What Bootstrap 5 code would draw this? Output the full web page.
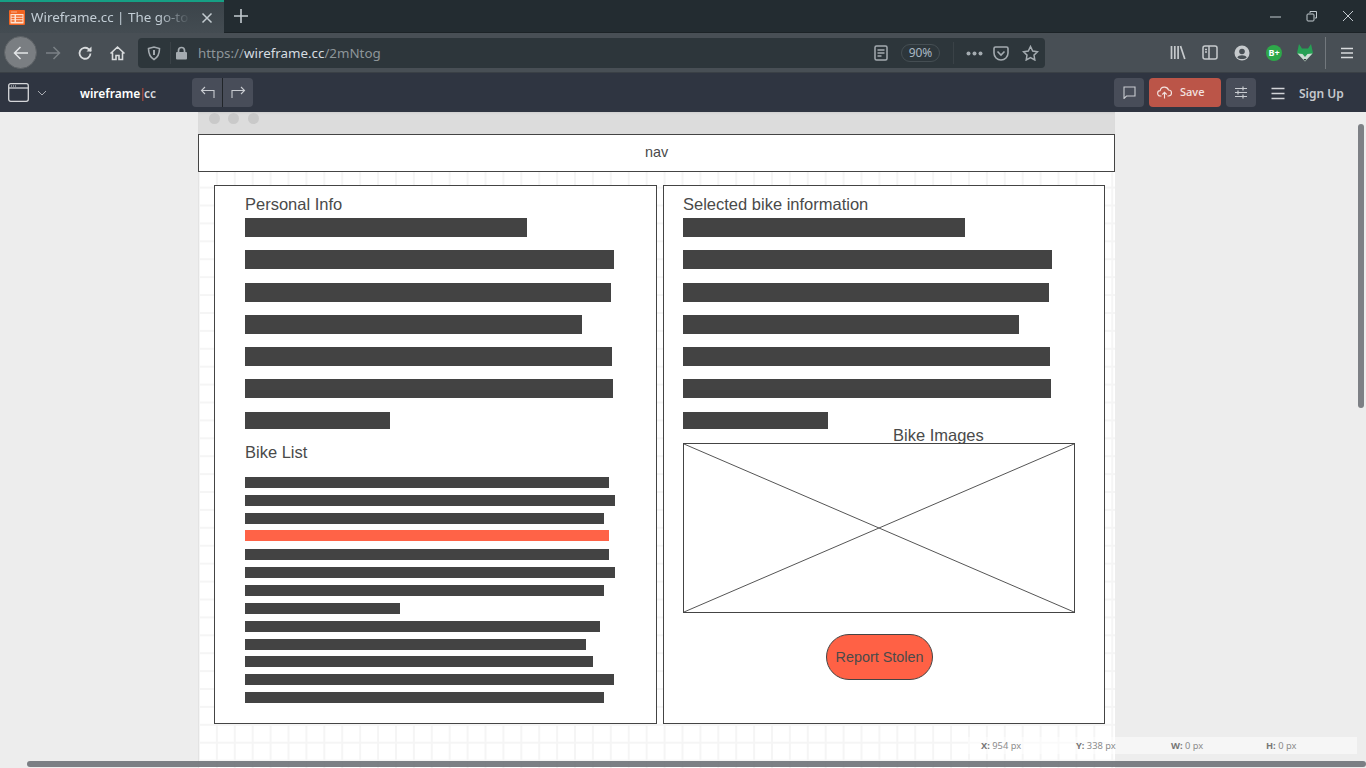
<!DOCTYPE html>
<html lang="en">
<head>
<meta charset="utf-8">
<title>Wireframe.cc</title>
<link href="https://cdn.jsdelivr.net/npm/bootstrap@5.3.0/dist/css/bootstrap.min.css" rel="stylesheet">
<style>
html,body{height:100%;overflow:hidden;margin:0}
body{background:#ededed;font-family:"Noto Sans",sans-serif;width:1366px;height:768px}
.tabstrip{height:33px;background:#232c31;border-bottom:1px solid #1c2327}
.tabitem{width:224px;height:33px;background:linear-gradient(#3b444a,#444c52);border-top:2px solid #16a085;color:#c3ced6;font-size:13.4px;padding-left:9px;gap:6px}
.tabtitle{width:163px;white-space:nowrap;-webkit-mask-image:linear-gradient(90deg,#000 78%,transparent 98%)}
.closeicon{margin-left:1px}
.newtab{margin-left:9px}
.winbtns{margin-left:auto;gap:20px;padding-right:10px}
.urlrow{height:40px;background:#484f55;border-bottom:1px solid #3a4046;padding-left:4px}
.backcircle{width:33px;height:33px;border-radius:50%;background:#7a7e82;border:1px solid #5d6266}
.navslot{width:32px}
.urlfield{position:absolute;left:138px;top:38px;width:907px;height:30px;background:#2d363b;border-radius:4px;font-size:13.35px;color:#8d9599}
.urlrow .urlhost{color:#d6dce0}
.idbox{width:33px;border-right:1px solid #3a4247;height:22px}
.lockicon{margin-left:4px}
.urltext{margin-left:10px}
.zoomchip{border:1px solid #454e53;border-radius:10px;font-size:12px;color:#a9b8c3;width:39px;height:18px;line-height:16px;text-align:center;margin-left:13px}
.urlright{margin-left:auto;padding-right:6px}
.fieldsep{width:1px;height:22px;background:#3a4247;margin-left:13px}
.dotsicon{margin-left:12px}
.pocketicon{margin-left:10px}
.staricon{margin-left:13px}
.rightset{margin-left:auto;padding-right:12px}
.gap16{margin-left:16px}
.gap14{margin-left:14px}
.rowsep{width:1px;height:32px;background:#72787d;margin-left:11px}
.appbar{height:39px;background:#2f3541;color:#fff}
.brandname{font-size:12px;font-weight:600;left:80px;top:85px;color:#fff;position:absolute;line-height:17px}
.brandname i{font-style:normal;color:#d2543f;font-weight:400;margin:0 -2px 0 -1px}
.brandname span{color:#d8dade}
.toolbtn{position:absolute;background:#484d59;border-radius:4px;height:29px;top:78px}
.undo{left:192px;width:61px}
.comment{left:1114px;width:30px}
.adjust{left:1226px;width:30px}
.savebtn{position:absolute;left:1149px;top:78px;width:72px;height:29px;background:#bb5548;border-radius:4px;color:#f3e3e0;font-size:11px;font-weight:500}
.menuicon{position:absolute;left:1271px;top:87px}
.signup{position:absolute;left:1299px;top:85px;color:#c6c9ce;font-size:12px;font-weight:600;line-height:17px}
.stage{position:absolute;left:0;top:112px;width:1366px;height:656px;overflow:hidden;background:#ededed}
.artboard{position:absolute;left:198px;top:0;width:917px;height:656px;background-color:#fff;
background-image:linear-gradient(#f5f5f5 2px,transparent 2px),linear-gradient(90deg,#f5f5f5 2px,transparent 2px);background-size:17.92px 17.92px;background-position:-1px 3px;border-left:1px solid #e3e3e3}
.dotbar{position:absolute;left:198px;top:0;width:917px;height:22px;background:#dcdcdc;box-shadow:inset 0 2px 2px -1px #cfcfcf}
.dotbar b{position:absolute;top:1px;width:11px;height:11px;border-radius:50%;background:#c9c9c9}
.dotbar b:nth-child(1){left:11px}.dotbar b:nth-child(2){left:30px}.dotbar b:nth-child(3){left:50px}
.wf{position:absolute;box-sizing:border-box}
.boxed{border:1px solid #444;background:#fff}
.wbar{position:absolute;background:#434343;height:19px}
.thin{height:11px}
.wtext{position:absolute;font-family:"Liberation Sans",sans-serif;color:#4a4a4a;font-size:16.5px;line-height:18px;white-space:nowrap}
.navlabel{left:198px;top:22px;width:917px;height:38px;font-family:"Liberation Sans",sans-serif;font-size:14.4px;color:#4a4a4a}
.p1{left:214px;top:73px;width:443px;height:539px}
.p2{left:663px;top:73px;width:442px;height:539px}
.imgbox{left:683px;top:331px;width:392px;height:170px}
.imgbox svg{display:block;width:100%;height:100%}
.stolen{left:826px;top:522px;width:107px;height:46px;background:#ff6145;border:1px solid #444;border-radius:23px;font-family:"Liberation Sans",sans-serif;font-size:14.4px;color:#4a4a4a;padding-top:1px}
.t1{left:245px;top:83px}.t2{left:245px;top:331px}.t3{left:683px;top:83px}.t4{left:893px;top:314px}
.lx{left:245px}.rx{left:683px}
.y1{top:106px}.y2{top:138px}.y3{top:171px}.y4{top:203px}.y5{top:235px}.y6{top:267px}.y7{top:300px;height:17px}
.w1{width:282px}.w2{width:369px}.w3{width:366px}.w4{width:337px}.w5{width:367px}.w6{width:368px}.w7{width:145px}
.r4{width:336px}
.z1{top:365px;width:364px}.z2{top:383px;width:370px}.z3{top:401px;width:359px}.z4{top:418px;width:364px;background:#ff6347}
.z5{top:437px;width:364px}.z6{top:455px;width:370px}.z7{top:473px;width:359px}.z8{top:491px;width:155px}
.z9{top:509px;width:355px}.z10{top:527px;width:341px}.z11{top:544px;width:348px}.z12{top:562px;width:369px}.z13{top:580px;width:359px}
.statusline{position:absolute;left:968px;top:625px;width:389px;height:17px;background:rgba(255,255,255,.5);font-size:9.3px;color:#8b8b8b;line-height:17px}
.statusline span{position:absolute;white-space:nowrap}
.statusline span:nth-child(1){left:13px}.statusline span:nth-child(2){left:108px}.statusline span:nth-child(3){left:203px}.statusline span:nth-child(4){left:298px}
.statusline b{color:#777;font-weight:700}
.vthumb{position:absolute;left:1358px;top:12px;width:6px;height:284px;background:#7d8085;border-radius:3px}
.hthumb{position:absolute;left:27px;top:649px;width:1339px;height:6px;background:rgba(110,114,120,.9);border-radius:3px}
</style>
</head>
<body>
<div class="tabstrip d-flex align-items-start">
  <div class="tabitem d-flex align-items-center">
    <svg width="16" height="15" viewBox="0 0 16 15"><rect width="16" height="15" rx="1" fill="#f26522"/><rect x="1.500" y="4" width="13" height="9.500" fill="#fde3d2"/><path d="M2.500 2h1M4.500 2h1M6.500 2h1" stroke="#fff"/><path d="M2.500 6h3M2.500 8.500h3M2.500 11h3M7 6h6.500M7 8.500h6.500M7 11h6.500" stroke="#f26522" stroke-width="1.300"/></svg>
    <span class="tabtitle">Wireframe.cc | The go-to v</span>
    <svg class="closeicon" width="12" height="12" viewBox="0 0 12 12"><path d="M1.500 1.500l9 9M10.500 1.500l-9 9" stroke="#c3cbd0" stroke-width="1.500"/></svg>
  </div>
  <svg class="newtab mt-2" width="16" height="16" viewBox="0 0 16 16"><path d="M8 1v14M1 8h14" stroke="#c3cbd0" stroke-width="1.600"/></svg>
  <div class="winbtns d-flex align-items-center mt-2">
    <svg width="16" height="16" viewBox="0 0 16 16"><path d="M2 9h11" stroke="#c3cbd0"/></svg>
    <svg width="16" height="16" viewBox="0 0 16 16" fill="none" stroke="#c3cbd0"><rect x="3" y="6" width="7" height="7" rx="1"/><path d="M6 5V3.500h6.500V10H11"/></svg>
    <svg width="16" height="16" viewBox="0 0 16 16"><path d="M3 3l10 10M13 3L3 13" stroke="#c3cbd0"/></svg>
  </div>
</div>
<div class="urlrow d-flex align-items-center">
  <div class="backcircle d-flex align-items-center justify-content-center">
    <svg width="18" height="16" viewBox="0 0 18 16" fill="none" stroke="#e4e6e8" stroke-width="1.500"><path d="M16 8H2.500M8.500 2l-6 6 6 6"/></svg>
  </div>
  <div class="navslot d-flex justify-content-center"><svg width="18" height="16" viewBox="0 0 18 16" fill="none" stroke="#7b8186" stroke-width="1.500"><path d="M2 8h13.500M9.500 2l6 6-6 6"/></svg></div>
  <div class="navslot d-flex justify-content-center"><svg width="16" height="16" viewBox="0 0 16 16" fill="none" stroke="#d8dbdd" stroke-width="1.800"><path d="M13.500 8.500A5.500 5.500 0 1 1 11.500 4L14 6"/><path d="M14.500 1.500v5h-5" stroke="none" fill="#d8dbdd"/></svg></div>
  <div class="navslot d-flex justify-content-center"><svg width="17" height="16" viewBox="0 0 17 16" fill="none" stroke="#d8dbdd" stroke-width="1.600"><path d="M1.500 8.500l7-6.500 7 6.500M3.500 7.500v7h3.500v-4h3v4h3.500v-7"/></svg></div>
  <div class="urlfield d-flex align-items-center">
    <div class="idbox d-flex justify-content-center align-items-center"><svg width="14" height="15" viewBox="0 0 14 15" fill="none" stroke="#a4abb0" stroke-width="1.600"><path d="M1.500 2.500L7 1l5.500 1.500c0 5-1 8.500-5.500 11-4.500-2.500-5.500-6-5.500-11z"/><path d="M7 4v5" stroke-width="2"/></svg></div>
    <svg class="lockicon" width="13" height="14" viewBox="0 0 13 14"><path d="M3.500 6V4.500a3 3 0 0 1 6 0V6" fill="none" stroke="#a4abb0" stroke-width="1.700"/><rect x="1" y="6" width="11" height="7.500" rx="1" fill="#a4abb0"/></svg>
    <span class="urltext">https://<span class="urlhost">wireframe.cc</span>/2mNtog</span>
    <div class="urlright d-flex align-items-center">
      <svg width="14" height="16" viewBox="0 0 14 16" fill="none" stroke="#a4abb0" stroke-width="1.500"><rect x="1" y="1" width="12" height="14" rx="1.500"/><path d="M3.500 5h7M3.500 8h7M3.500 11h4"/></svg>
      <span class="zoomchip">90%</span>
      <span class="fieldsep"></span>
      <svg class="dotsicon" width="17" height="5" viewBox="0 0 17 5" fill="#a4abb0"><circle cx="2.500" cy="2.500" r="2"/><circle cx="8.500" cy="2.500" r="2"/><circle cx="14.500" cy="2.500" r="2"/></svg>
      <svg class="pocketicon" width="16" height="15" viewBox="0 0 16 15" fill="none" stroke="#a4abb0" stroke-width="1.600"><path d="M1 2.500C1 1.500 1.500 1 2.500 1h11c1 0 1.500.5 1.500 1.500V7a7 7 0 0 1-14 0z"/><path d="M4.500 5.500L8 9l3.500-3.500"/></svg>
      <svg class="staricon" width="17" height="16" viewBox="0 0 17 16" fill="none" stroke="#a4abb0" stroke-width="1.500"><path d="M8.500 1.500l2.200 4.500 4.800.7-3.500 3.400.8 4.900-4.300-2.300-4.300 2.300.8-4.900L1.500 6.700l4.800-.7z"/></svg>
    </div>
  </div>
  <div class="rightset d-flex align-items-center">
    <svg width="16" height="15" viewBox="0 0 16 15" fill="none" stroke="#c6cacd" stroke-width="1.700"><path d="M1.500 1v13M4.800 1v13M8.100 1v13M10.500 1l4.300 13"/></svg>
    <svg class="gap16" width="16" height="15" viewBox="0 0 16 15" fill="none" stroke="#c6cacd" stroke-width="1.500"><rect x="1" y="1" width="14" height="13" rx="2"/><path d="M7 1v13M3 4.500h2M3 7h2"/></svg>
    <svg class="gap16" width="16" height="16" viewBox="0 0 16 16"><circle cx="8" cy="8" r="7.500" fill="#c6cacd"/><circle cx="8" cy="6.500" r="2.800" fill="#484f55"/><path d="M3.300 12.500c1-3 8.400-3 9.400 0-2 2-7.400 2-9.400 0z" fill="#484f55"/></svg>
    <svg class="gap16" width="16" height="16" viewBox="0 0 16 16"><circle cx="8" cy="8" r="8" fill="#2ea84a"/><text x="2.500" y="11" font-size="9" font-weight="700" fill="#fff" font-family="Noto Sans">B+</text></svg>
    <svg class="gap14" width="18" height="18" viewBox="0 0 18 18"><path d="M3 0l3 4.500h6L15 0l2 9-8 8-8-8z" fill="#27a055"/><path d="M1.500 9.500l5 .5 2.500 3 2.500-3 5-.5-7.500 8z" fill="#cfdcd5"/><path d="M7.500 15h3L9 17z" fill="#2f3a3a"/></svg>
    <span class="rowsep"></span>
    <svg class="gap14" width="14" height="14" viewBox="0 0 14 14"><path d="M1 2.500h12M1 7h12M1 11.500h12" stroke="#d8dbdd" stroke-width="1.700"/></svg>
  </div>
</div>
<div class="appbar d-flex align-items-center ps-2">
  <svg width="21" height="19" viewBox="0 0 21 19" fill="none" stroke="#d5d7da" stroke-width="1.300"><rect x=".7" y=".7" width="19.600" height="17.600" rx="2"/><path d="M1 5h19"/><path d="M3 3h1M5 3h1M7 3h1" stroke-width="1"/></svg>
  <svg class="ms-2" width="10" height="6" viewBox="0 0 10 6" fill="none" stroke="#a9acb2"><path d="M1 1l4 4 4-4"/></svg>
</div>
<span class="brandname">wireframe<i>|</i><span>cc</span></span>
<div class="toolbtn undo d-flex">
  <div class="d-flex flex-fill align-items-center justify-content-center border-end border-dark"><svg width="15" height="13" viewBox="0 0 15 13" fill="none" stroke="#c9ccd1" stroke-width="1.100"><path d="M14 12V4.500H1.500M5 1L1.500 4.500 5 8"/></svg></div>
  <div class="d-flex flex-fill align-items-center justify-content-center"><svg width="15" height="13" viewBox="0 0 15 13" fill="none" stroke="#c9ccd1" stroke-width="1.100"><path d="M1 12V4.500h12.500M10 1l3.500 3.500L10 8"/></svg></div>
</div>
<div class="toolbtn comment d-flex align-items-center justify-content-center"><svg width="13" height="13" viewBox="0 0 13 13" fill="none" stroke="#c9ccd1" stroke-width="1.100"><path d="M1 1h11v9H3.500L1 12.500z"/></svg></div>
<div class="savebtn d-flex align-items-center"><svg class="ms-2" width="15" height="13" viewBox="0 0 15 13" fill="none" stroke="#f3e3e0" stroke-width="1.100"><path d="M4.500 10H3.500a2.700 2.700 0 0 1-.3-5.400A4.300 4.300 0 0 1 11.500 4a3 3 0 0 1 0 6h-1"/><path d="M7.500 12.500V6.500M5.300 8.500l2.200-2.200 2.200 2.200"/></svg><span class="ms-2">Save</span></div>
<div class="toolbtn adjust d-flex align-items-center justify-content-center"><svg width="14" height="13" viewBox="0 0 14 13" stroke="#c9ccd1" stroke-width="1.200"><path d="M1 2.500h12M1 6.500h12M1 10.500h12M9 .5v4M4 4.500v4M9 8.500v4"/></svg></div>
<svg class="menuicon" width="14" height="13" viewBox="0 0 14 13"><path d="M.5 1.500h13M.5 6.500h13M.5 11.500h13" stroke="#d2d4d8" stroke-width="1.300"/></svg>
<span class="signup">Sign Up</span>

<main class="stage">
  <div class="artboard"></div>
  <div class="dotbar"><b></b><b></b><b></b></div>
  <div class="wf boxed navlabel d-flex align-items-center justify-content-center">nav</div>
  <div class="wf boxed p1"></div>
  <div class="wf boxed p2"></div>

  <div class="wtext t1">Personal Info</div>
  <div class="wbar lx y1 w1"></div><div class="wbar lx y2 w2"></div><div class="wbar lx y3 w3"></div><div class="wbar lx y4 w4"></div><div class="wbar lx y5 w5"></div><div class="wbar lx y6 w6"></div><div class="wbar lx y7 w7"></div>
  <div class="wtext t2">Bike List</div>
  <div class="wbar thin lx z1"></div><div class="wbar thin lx z2"></div><div class="wbar thin lx z3"></div><div class="wbar thin lx z4"></div><div class="wbar thin lx z5"></div><div class="wbar thin lx z6"></div><div class="wbar thin lx z7"></div><div class="wbar thin lx z8"></div><div class="wbar thin lx z9"></div><div class="wbar thin lx z10"></div><div class="wbar thin lx z11"></div><div class="wbar thin lx z12"></div><div class="wbar thin lx z13"></div>

  <div class="wtext t3">Selected bike information</div>
  <div class="wbar rx y1 w1"></div><div class="wbar rx y2 w2"></div><div class="wbar rx y3 w3"></div><div class="wbar rx y4 r4"></div><div class="wbar rx y5 w5"></div><div class="wbar rx y6 w6"></div><div class="wbar rx y7 w7"></div>
  <div class="wtext t4">Bike Images</div>
  <div class="wf boxed imgbox"><svg viewBox="0 0 390 168" preserveAspectRatio="none"><path d="M0 0L390 168M390 0L0 168" stroke="#555" stroke-width="1" fill="none" vector-effect="non-scaling-stroke"/></svg></div>
  <div class="wf stolen d-flex align-items-center justify-content-center">Report Stolen</div>

  <div class="statusline">
    <span><b>X:</b> 954 px</span><span><b>Y:</b> 338 px</span><span><b>W:</b> 0 px</span><span><b>H:</b> 0 px</span>
  </div>
  <div class="vthumb"></div>
  <div class="hthumb"></div>
</main>
</body>
</html>
